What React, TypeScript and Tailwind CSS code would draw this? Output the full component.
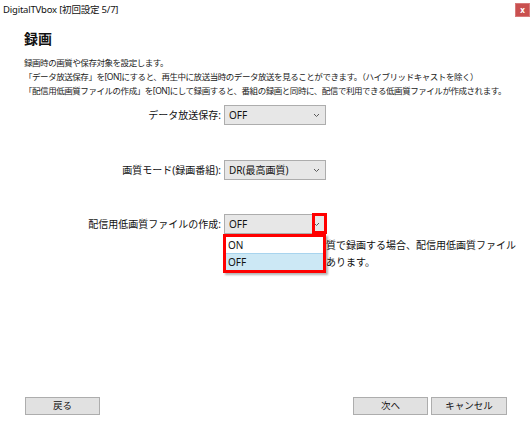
import React from "react";

const Chevron = () => (
  <svg width="7" height="5" viewBox="0 0 7 5" className="block">
    <path d="M1 1 L3.5 3.5 L6 1" fill="none" stroke="#5a5a5a" strokeWidth="1" />
  </svg>
);

function Select({ value, children }: { value: string; children?: React.ReactNode }) {
  return (
    <div className="relative w-[102px] h-[20px] bg-[#e7e7e7] border border-[#adadad] flex items-center justify-between pl-[4px] pr-[5px] text-[10px] text-[#111]">
      <span>{value}</span>
      <Chevron />
      {children}
    </div>
  );
}

function Row({ label, value, children, className = "" }: { label: string; value: string; children?: React.ReactNode; className?: string }) {
  return (
    <div className={`flex items-center ${className}`}>
      <div className="w-[224px] text-right text-[10px] pr-[3px] text-[#111]">{label}</div>
      <Select value={value}>{children}</Select>
    </div>
  );
}

function Btn({ label, className = "" }: { label: string; className?: string }) {
  return (
    <div className={`h-[18px] bg-[#e1e1e1] border border-[#adadad] flex items-center justify-center text-[9.5px] text-[#111] ${className}`}>
      {label}
    </div>
  );
}

export default function App() {
  return (
    <div
      className="relative w-[531px] h-[424px] bg-white flex flex-col overflow-hidden"
      style={{ fontFamily: "'Noto Sans', 'Noto Sans CJK JP', sans-serif" }}
    >
      <div className="h-[20px] flex items-center justify-between pl-[3px] pr-[1px] text-[9.5px] text-[#111]">
        <span className="tracking-[-0.2px]">DigitalTVbox [初回設定 5/7]</span>
        <div className="w-[15px] h-[14px] bg-[#c9504f] border border-[#d77a7a] flex items-center justify-center text-white text-[8px] font-bold leading-none">
          x
        </div>
      </div>

      <div className="pl-[24px]">
        <div className="mt-[10px] h-[18px] leading-[18px] text-[14px] font-semibold text-[#111]">録画</div>
        <div className="mt-[8px] text-[8.5px] leading-[14px] tracking-[-0.45px] text-[#222]">
          <div>録画時の画質や保存対象を設定します。</div>
          <div>「データ放送保存」を[ON]にすると、再生中に放送当時のデータ放送を見ることができます。（ハイブリッドキャストを除く）</div>
          <div>「配信用低画質ファイルの作成」を[ON]にして録画すると、番組の録画と同時に、配信で利用できる低画質ファイルが作成されます。</div>
        </div>
      </div>

      <Row label="データ放送保存:" value="OFF" className="mt-[7px]" />
      <Row label="画質モード(録画番組):" value="DR(最高画質)" className="mt-[35px]" />
      <Row label="配信用低画質ファイルの作成:" value="OFF" className="mt-[34px] relative z-10">
        <div className="absolute left-[87px] top-[-2px] w-[15px] h-[21px] border-[3px] border-[#ff0000]" />
        <div className="absolute left-[-2px] top-[19px] w-[103px] h-[39px] bg-white border-[3px] border-[#ff0000] shadow-[2px_2px_2px_rgba(0,0,0,0.3)] flex flex-col">
          <div className="h-[16px] flex items-center pl-[2px] text-[10px] text-[#111]">ON</div>
          <div className="flex-1 bg-[#cce8f5] border-t border-[#a8d4ee] flex items-center pl-[2px] text-[10px] text-[#111]">OFF</div>
        </div>
      </Row>

      <div className="mt-[3px] pl-[326px] text-[10px] leading-[17px] text-[#111] whitespace-nowrap">
        <div>質で録画する場合、配信用低画質ファイル</div>
        <div>あります。</div>
      </div>

      <div className="mt-auto mb-[9px] flex items-center px-[25px] pr-[24px]">
        <Btn label="戻る" className="w-[75px]" />
        <div className="flex-1" />
        <Btn label="次へ" className="w-[75px]" />
        <Btn label="キャンセル" className="w-[76px] ml-[3px]" />
      </div>
    </div>
  );
}
